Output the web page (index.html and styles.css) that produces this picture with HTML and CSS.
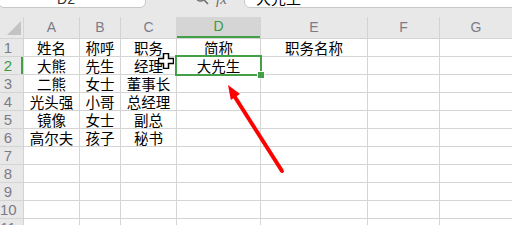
FILE: index.html
```html
<!DOCTYPE html>
<html lang="zh-CN">
<head>
    <meta charset="UTF-8">
    <title>表格</title>
    <link rel="stylesheet" href="styles.css">
</head>
<body>
    <div class="screen">
        <div class="formula">
            <div class="namebox">D2</div>
            <div class="tools">
                <svg class="zoom" width="16" height="16" viewBox="0 0 16 16">
                    <circle cx="6.5" cy="6.5" r="4.5" fill="none" stroke="#6e6e6e" stroke-width="1.4"/>
                    <line x1="10" y1="10" x2="14" y2="14" stroke="#6e6e6e" stroke-width="1.6"/>
                </svg>
                <span class="fx">fx</span>
            </div>
            <div class="editbox">大先生</div>
        </div>

        <div class="grid">
            <div class="corner">
                <svg width="16" height="16" viewBox="0 0 16 16"><polygon points="15,1 15,15 1,15" fill="#c3c3c3"/></svg>
            </div>
            <div class="colhead">A</div><div class="colhead">B</div><div class="colhead">C</div>
            <div class="colhead active">D</div><div class="colhead">E</div><div class="colhead">F</div><div class="colhead">G</div>

            <div class="rowhead">1</div><div class="cell">姓名</div><div class="cell">称呼</div><div class="cell">职务</div><div class="cell">简称</div><div class="cell">职务名称</div><div class="cell"></div><div class="cell"></div>
            <div class="rowhead active">2</div><div class="cell">大熊</div><div class="cell">先生</div><div class="cell">经理</div><div class="cell selected">大先生</div><div class="cell"></div><div class="cell"></div><div class="cell"></div>
            <div class="rowhead">3</div><div class="cell">二熊</div><div class="cell">女士</div><div class="cell">董事长</div><div class="cell"></div><div class="cell"></div><div class="cell"></div><div class="cell"></div>
            <div class="rowhead">4</div><div class="cell">光头强</div><div class="cell">小哥</div><div class="cell">总经理</div><div class="cell"></div><div class="cell"></div><div class="cell"></div><div class="cell"></div>
            <div class="rowhead">5</div><div class="cell">镜像</div><div class="cell">女士</div><div class="cell">副总</div><div class="cell"></div><div class="cell"></div><div class="cell"></div><div class="cell"></div>
            <div class="rowhead">6</div><div class="cell">高尔夫</div><div class="cell">孩子</div><div class="cell">秘书</div><div class="cell"></div><div class="cell"></div><div class="cell"></div><div class="cell"></div>
            <div class="rowhead">7</div><div class="cell"></div><div class="cell"></div><div class="cell"></div><div class="cell"></div><div class="cell"></div><div class="cell"></div><div class="cell"></div>
            <div class="rowhead">8</div><div class="cell"></div><div class="cell"></div><div class="cell"></div><div class="cell"></div><div class="cell"></div><div class="cell"></div><div class="cell"></div>
            <div class="rowhead">9</div><div class="cell"></div><div class="cell"></div><div class="cell"></div><div class="cell"></div><div class="cell"></div><div class="cell"></div><div class="cell"></div>
            <div class="rowhead">10</div><div class="cell"></div><div class="cell"></div><div class="cell"></div><div class="cell"></div><div class="cell"></div><div class="cell"></div><div class="cell"></div>
            <div class="rowhead">11</div><div class="cell"></div><div class="cell"></div><div class="cell"></div><div class="cell"></div><div class="cell"></div><div class="cell"></div><div class="cell"></div>
        </div>

        <!-- 鼠标十字光标 -->
        <svg class="cursor" width="16" height="16" viewBox="0 0 16 16">
            <path d="M5.5 0.5h5v5h5v5h-5v5h-5v-5h-5v-5h5z" fill="#fff" stroke="#000" stroke-width="1.5"/>
        </svg>

        <!-- 红色箭头 -->
        <svg class="arrow" width="512" height="225" viewBox="0 0 512 225">
            <line x1="233" y1="94" x2="282" y2="171" stroke="#ff0000" stroke-width="4" stroke-linecap="round"/>
            <polygon points="228,85 230.8,100 240,94" fill="#ff0000"/>
        </svg>
    </div>
</body>
</html>
```

FILE: styles.css
```css
*{
    box-sizing: border-box;
}
body{
    margin: 0;
    background-color: #fff;
    overflow: hidden;
}
.screen{
    position: relative;
    width: 512px;
    height: 225px;
    overflow: hidden;
    font-family: "Noto Sans CJK SC", "Liberation Sans", sans-serif;
}

/* 公式栏，只露出底部一截 */
.formula{
    display: flex;
    align-items: flex-start;
    height: 40px;
    margin-top: -23px;
    background-color: #e8e8e8;
}
.namebox{
    display: flex;
    align-items: flex-end;
    justify-content: center;
    width: 148px;
    height: 31px;
    margin-left: -2px;
    padding-right: 12px;
    background-color: #fff;
    border: 1px solid #c8c8c8;
    border-radius: 0 0 6px 6px;
    font-family: "Liberation Sans", sans-serif;
    font-size: 14px;
    line-height: 16px;
    color: #333;
}
.tools{
    display: flex;
    align-items: flex-end;
    height: 31px;
    width: 98px;
    padding-left: 48px;
    gap: 6px;
}
.zoom{
    margin-bottom: 2px;
}
.fx{
    font-family: "Liberation Serif", serif;
    font-style: italic;
    font-size: 15px;
    line-height: 17px;
    color: #6e6e6e;
}
.editbox{
    display: flex;
    align-items: flex-end;
    flex: 1;
    height: 31px;
    margin-right: -10px;
    padding-left: 11px;
    background-color: #fff;
    border: 1px solid #c8c8c8;
    border-radius: 0 0 0 6px;
    font-size: 15px;
    line-height: 18px;
    color: #000;
}

/* 表格 */
.grid{
    display: grid;
    grid-template-columns: 23px 55px 40px 55px 83px 106px 71px 1fr;
    grid-template-rows: 21px repeat(11, 17px);
    gap: 1px;
    background-color: #d4d4d4;
}
.corner{
    display: flex;
    align-items: flex-end;
    justify-content: flex-end;
    padding: 0 1px 2px 0;
    background-color: #e8e8e8;
}
.colhead{
    background-color: #e8e8e8;
    text-align: center;
    font-family: "Liberation Sans", sans-serif;
    font-size: 14px;
    line-height: 21px;
    color: #7c7c88;
}
.colhead.active{
    background-color: #d5d5d5;
    color: #3a9a3e;
    border-bottom: 2px solid #43a047;
    line-height: 19px;
}
.rowhead{
    background-color: #e8e8e8;
    padding-right: 7px;
    text-align: center;
    font-family: "Liberation Sans", sans-serif;
    font-size: 15px;
    line-height: 17px;
    color: #7c7c88;
}
.rowhead.active{
    color: #3a9a3e;
    border-right: 2px solid #43a047;
    padding-right: 5px;
}
.cell{
    background-color: #fff;
    text-align: center;
    font-size: 14.5px;
    line-height: 17px;
    color: #000;
    white-space: nowrap;
}
.cell.selected{
    position: relative;
    z-index: 1;
    outline: 2px solid #43a047;
}
.cell.selected::after{
    content: "";
    position: absolute;
    right: -5px;
    bottom: -5px;
    width: 6px;
    height: 6px;
    background-color: #43a047;
    border: 1px solid #fff;
}

.cursor{
    position: absolute;
    left: 158px;
    top: 53px;
    z-index: 2;
}
.arrow{
    position: absolute;
    left: 0;
    top: 0;
    z-index: 3;
}
```
